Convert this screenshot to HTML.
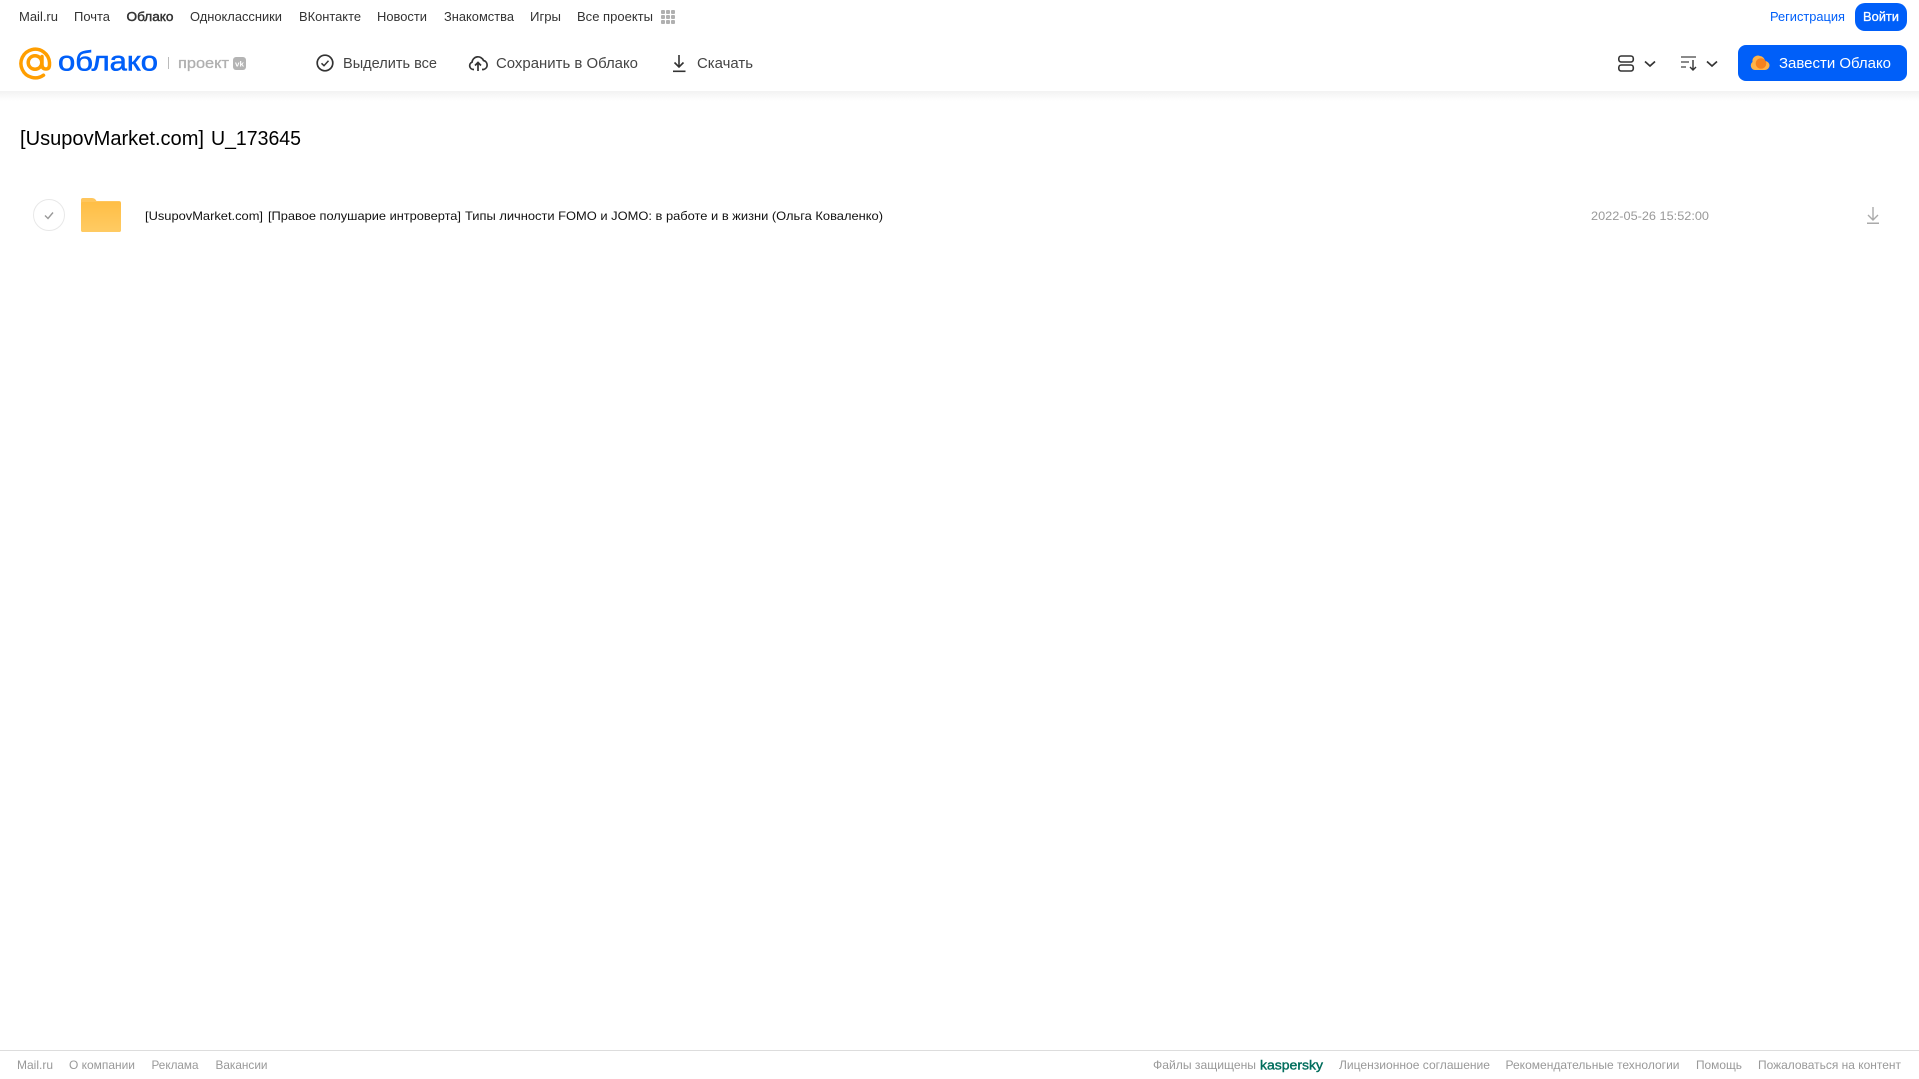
<!DOCTYPE html>
<html lang="ru"><head><meta charset="utf-8"><title>Облако</title>
<style>
html,body{margin:0;padding:0;background:#fff;width:1919px;height:1079px;overflow:hidden}
svg{display:block;position:absolute;left:0;top:0}
text{font-family:"Liberation Sans",sans-serif}
.n{font-size:13px;fill:#333}
.h{font-size:15px;fill:#444}
.f{font-size:12px;fill:#999}
</style></head><body>
<svg width="1919" height="1079" viewBox="0 0 1919 1079" xmlns="http://www.w3.org/2000/svg">
<defs>
<linearGradient id="sh" x1="0" y1="0" x2="0" y2="1"><stop offset="0" stop-color="#f2f2f2"/><stop offset="1" stop-color="#fff"/></linearGradient>
<linearGradient id="fo" x1="0" y1="0" x2="0" y2="1"><stop offset="0" stop-color="#ffbe45"/><stop offset="1" stop-color="#ffcb63"/></linearGradient>
</defs>
<rect x="0" y="91" width="1919" height="10" fill="url(#sh)"/>

<g class="n">
<text class="n" x="19" y="21" textLength="39" lengthAdjust="spacingAndGlyphs">Mail.ru</text>
<text class="n" x="74" y="21" textLength="36" lengthAdjust="spacingAndGlyphs">Почта</text>
<text class="n" x="126.500" y="21" textLength="47" lengthAdjust="spacingAndGlyphs" stroke="#333" stroke-width=".45">Облако</text>
<text class="n" x="190" y="21" textLength="92" lengthAdjust="spacingAndGlyphs">Одноклассники</text>
<text class="n" x="299" y="21" textLength="62" lengthAdjust="spacingAndGlyphs">ВКонтакте</text>
<text class="n" x="377" y="21" textLength="50" lengthAdjust="spacingAndGlyphs">Новости</text>
<text class="n" x="444" y="21" textLength="70" lengthAdjust="spacingAndGlyphs">Знакомства</text>
<text class="n" x="530" y="21" textLength="31" lengthAdjust="spacingAndGlyphs">Игры</text>
<text class="n" x="577" y="21" textLength="76" lengthAdjust="spacingAndGlyphs">Все проекты</text>
</g>
<g fill="#b0b0b0">
<rect x="661" y="10" width="4" height="4" rx="1"/><rect x="666" y="10" width="4" height="4" rx="1"/><rect x="671" y="10" width="4" height="4" rx="1"/>
<rect x="661" y="15" width="4" height="4" rx="1"/><rect x="666" y="15" width="4" height="4" rx="1"/><rect x="671" y="15" width="4" height="4" rx="1"/>
<rect x="661" y="20" width="4" height="4" rx="1"/><rect x="666" y="20" width="4" height="4" rx="1"/><rect x="671" y="20" width="4" height="4" rx="1"/>
</g>

<text x="1770" y="21" font-size="13" fill="#005ff9" textLength="75" lengthAdjust="spacingAndGlyphs">Регистрация</text>
<rect x="1855" y="3" width="52" height="28" rx="10" fill="#005ff9"/>
<text x="1863" y="21" font-size="13" fill="#fff" stroke="#fff" stroke-width=".3" textLength="36" lengthAdjust="spacingAndGlyphs">Войти</text>

<!-- logo -->
<g fill="none" stroke="#ff9e00" stroke-width="3.500">
<circle cx="35" cy="62.500" r="6.800"/>
<path d="M43.500 75.200A14.300 14.300 0 1 1 49.500 62.500V64.500Q49.500 69 46 69Q42 69 42 64.500V56.500" stroke-linecap="round"/>
</g>
<text x="58" y="70.500" font-size="28" fill="#005ff9" stroke="#005ff9" stroke-width=".6" textLength="100" lengthAdjust="spacingAndGlyphs">облако</text>
<rect x="168" y="57" width="1" height="12" fill="#bbb"/>
<text x="178" y="68" font-size="15" fill="#b0b0b0" stroke="#b0b0b0" stroke-width=".3" textLength="51" lengthAdjust="spacingAndGlyphs">проект</text>
<rect x="233" y="57" width="13" height="13" rx="3" fill="#b4b4b4"/>
<text x="235" y="66.500" font-size="7.500" font-weight="700" fill="#fff" textLength="9" lengthAdjust="spacingAndGlyphs">vk</text>

<!-- toolbar -->
<circle cx="325" cy="63" r="7.800" fill="none" stroke="#333" stroke-width="1.700"/>
<path d="M321.500 63.300L324 65.700L328.500 60.800" fill="none" stroke="#333" stroke-width="1.500"/>
<text class="h" x="343" y="68" textLength="94" lengthAdjust="spacingAndGlyphs">Выделить все</text>

<path d="M474 69.500H473.500A3.800 3.800 0 0 1 472 62.200A6 6 0 0 1 483.500 60.500A4.600 4.600 0 0 1 483.500 69.500H482" fill="none" stroke="#333" stroke-width="1.700"/>
<path d="M478 71V62.500M475 65.500L478 62.500L481 65.500" fill="none" stroke="#333" stroke-width="1.700"/>
<text class="h" x="496" y="68" textLength="142" lengthAdjust="spacingAndGlyphs">Сохранить в Облако</text>

<path d="M679 55V67M674.500 62.500L679 67L683.500 62.500" fill="none" stroke="#333" stroke-width="1.600"/>
<rect x="673" y="70.500" width="12.500" height="1.600" fill="#333"/>
<text class="h" x="697" y="68" textLength="56" lengthAdjust="spacingAndGlyphs">Скачать</text>

<rect x="1618.800" y="56" width="14.500" height="6" rx="2.500" fill="none" stroke="#333" stroke-width="1.600"/>
<rect x="1618.800" y="65" width="14.500" height="6" rx="2.500" fill="none" stroke="#333" stroke-width="1.600"/>
<path d="M1645 61.500L1650 66L1655 61.500" fill="none" stroke="#333" stroke-width="1.700"/>

<path d="M1681 57H1696M1681 62H1689M1681 67H1686" fill="none" stroke="#444" stroke-width="1.300"/>
<path d="M1693 60V70M1690 67L1693 70L1696 67" fill="none" stroke="#333" stroke-width="1.400"/>
<path d="M1707 61.500L1712 66L1717 61.500" fill="none" stroke="#333" stroke-width="1.700"/>

<rect x="1738" y="45" width="169" height="36" rx="8" fill="#005ff9"/>
<path d="M1755 70A4.500 4.500 0 0 1 1752.500 62A5.500 5.500 0 0 1 1760 56A5.500 5.500 0 0 1 1765 61A4.500 4.500 0 0 1 1765 70Z" fill="#ffb347"/>
<circle cx="1761" cy="63.500" r="5.300" fill="#f5821f"/>
<text x="1779" y="68" font-size="15" fill="#fff" textLength="112" lengthAdjust="spacingAndGlyphs">Завести Облако</text>

<!-- title -->
<text x="20" y="145" font-size="20" fill="#000" textLength="184" lengthAdjust="spacingAndGlyphs">[UsupovMarket.com]</text>
<text x="211" y="145" font-size="20" fill="#000" textLength="90" lengthAdjust="spacingAndGlyphs">U_173645</text>

<!-- row -->
<circle cx="49" cy="215" r="15.500" fill="#fff" stroke="#e8e8e8" stroke-width="1"/>
<path d="M45 215.500L48 218.500L53 212.500" fill="none" stroke="#999" stroke-width="1.400"/>
<path d="M83 198H92Q95 198 96.500 201H119Q121 201 121 203V230Q121 232 119 232H83Q81 232 81 230V200Q81 198 83 198Z" fill="#ffc65c"/>
<path d="M81 204Q81 202 83 202H119Q121 202 121 204V230Q121 232 119 232H83Q81 232 81 230Z" fill="url(#fo)"/>
<text x="145" y="220" font-size="12" fill="#111" textLength="118" lengthAdjust="spacingAndGlyphs">[UsupovMarket.com]</text>
<text x="268" y="220" font-size="12" fill="#111" textLength="193" lengthAdjust="spacingAndGlyphs">[Правое полушарие интроверта]</text>
<text x="465" y="220" font-size="12" fill="#111" textLength="418" lengthAdjust="spacingAndGlyphs">Типы личности FOMO и JOMO: в работе и в жизни (Ольга Коваленко)</text>
<text x="1591" y="220" font-size="12" fill="#999" textLength="118" lengthAdjust="spacingAndGlyphs">2022-05-26 15:52:00</text>
<path d="M1873 207V220M1868 215L1873 220L1878 215" fill="none" stroke="#aaa" stroke-width="1.400"/>
<rect x="1867" y="222.500" width="12" height="1.500" fill="#aaa"/>

<!-- footer -->
<rect x="0" y="1050" width="1919" height="1" fill="#ddd"/>
<text class="f" x="17" y="1069" textLength="36" lengthAdjust="spacingAndGlyphs">Mail.ru</text>
<text class="f" x="69" y="1069" textLength="66" lengthAdjust="spacingAndGlyphs">О компании</text>
<text class="f" x="151.500" y="1069" textLength="47" lengthAdjust="spacingAndGlyphs">Реклама</text>
<text class="f" x="215.500" y="1069" textLength="52" lengthAdjust="spacingAndGlyphs">Вакансии</text>
<text class="f" x="1153" y="1069" textLength="103" lengthAdjust="spacingAndGlyphs">Файлы защищены</text>
<text x="1260" y="1069.500" font-size="13" fill="#006d5c" stroke="#006d5c" stroke-width=".4" textLength="63" lengthAdjust="spacingAndGlyphs">kaspersky</text>
<text class="f" x="1339" y="1069" textLength="151" lengthAdjust="spacingAndGlyphs">Лицензионное соглашение</text>
<text class="f" x="1505.500" y="1069" textLength="174" lengthAdjust="spacingAndGlyphs">Рекомендательные технологии</text>
<text class="f" x="1696" y="1069" textLength="46" lengthAdjust="spacingAndGlyphs">Помощь</text>
<text class="f" x="1758" y="1069" textLength="143" lengthAdjust="spacingAndGlyphs">Пожаловаться на контент</text>
</svg>
</body></html>
